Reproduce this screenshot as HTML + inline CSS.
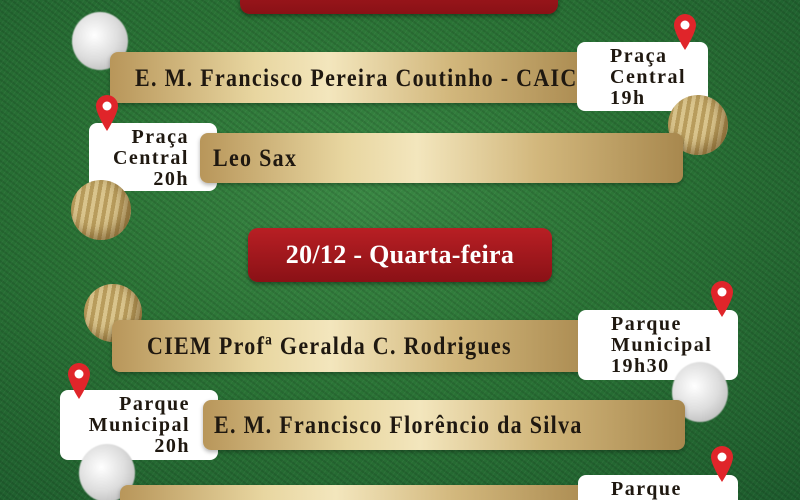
<!DOCTYPE html>
<html style="width:800px;height:500px;overflow:hidden"><head><meta charset="utf-8"><style>
*{margin:0;padding:0;box-sizing:border-box}
body{width:800px;height:500px;overflow:hidden;position:relative;font-family:"Liberation Serif",serif;font-weight:bold;
background:radial-gradient(ellipse at 45% 40%,#3a8844 0%,#2a7335 45%,#1d5c2d 100%);}
.tex{position:absolute;inset:0;background:
repeating-linear-gradient(37deg,rgba(0,0,0,.1) 0 2px,transparent 2px 5px),
repeating-linear-gradient(-53deg,rgba(255,255,255,.04) 0 1px,transparent 1px 4px);}
.bar{position:absolute;border-radius:8px;background:linear-gradient(90deg,#b8965a 0%,#e8d6a0 30%,#f3e6bd 45%,#d2b77c 70%,#a8884e 100%);box-shadow:0 2px 4px rgba(0,0,0,.3);color:#1f1810;font-size:22px;letter-spacing:1.3px;display:flex;align-items:center}
.bar span,.box span{display:inline-block;transform:scaleY(1.15)}
.box{position:absolute;background:#fff;border-radius:8px;color:#1f1810;font-size:20px;line-height:21px;letter-spacing:1.5px;padding-top:4px}
.red{position:absolute;border-radius:10px;background:linear-gradient(180deg,#b81f24,#8a1116);box-shadow:0 2px 4px rgba(0,0,0,.4);color:#fff;font-size:26px;display:flex;align-items:center;justify-content:center;font-weight:bold;letter-spacing:.3px}
.ball{position:absolute;border-radius:50%}
.g{background:repeating-linear-gradient(100deg,#d9c48c 0 4px,#b89c5c 4px 8px);box-shadow:inset -6px -6px 12px rgba(90,60,20,.5)}
.s{background:radial-gradient(circle at 40% 40%,#fff,#ddd 50%,#aaa);filter:blur(.6px)}
.pin{position:absolute;width:24px;height:38px}
</style></head><body><div class="tex"></div>
<div class="red" style="left:240px;top:-40px;width:318px;height:54px"></div>

<div class="ball s" style="left:72px;top:12px;width:56px;height:58px"></div>
<div class="bar" style="left:110px;top:52px;width:486px;height:51px;padding-left:25px"><span>E. M. Francisco Pereira Coutinho - CAIC</span></div>
<div class="box" style="left:577px;top:42px;width:131px;height:69px;padding-left:33px">Praça<br>Central<br>19h</div>
<svg class="pin" style="left:673px;top:13px" viewBox="0 0 24 38"><path d="M12 37C12 37 1 20 1 12a11 11 0 0 1 22 0c0 8-11 25-11 25z" fill="#e0252a"/><circle cx="12" cy="12" r="4.5" fill="#fff"/></svg>
<div class="ball g" style="left:668px;top:95px;width:60px;height:60px"></div>

<div class="box" style="left:89px;top:123px;width:128px;height:68px;text-align:right;padding-right:28px">Praça<br>Central<br>20h</div>
<div class="bar" style="left:200px;top:133px;width:483px;height:50px;padding-left:13px"><span>Leo Sax</span></div>
<svg class="pin" style="left:95px;top:94px" viewBox="0 0 24 38"><path d="M12 37C12 37 1 20 1 12a11 11 0 0 1 22 0c0 8-11 25-11 25z" fill="#e0252a"/><circle cx="12" cy="12" r="4.5" fill="#fff"/></svg>
<div class="ball g" style="left:71px;top:180px;width:60px;height:60px"></div>

<div class="red" style="left:248px;top:228px;width:304px;height:54px">20/12 - Quarta-feira</div>

<div class="ball g" style="left:84px;top:284px;width:58px;height:58px"></div>
<div class="bar" style="left:112px;top:320px;width:486px;height:52px;padding-left:35px"><span>CIEM Profª Geralda C. Rodrigues</span></div>
<div class="box" style="left:578px;top:310px;width:160px;height:70px;padding-left:33px">Parque<br>Municipal<br>19h30</div>
<svg class="pin" style="left:710px;top:280px" viewBox="0 0 24 38"><path d="M12 37C12 37 1 20 1 12a11 11 0 0 1 22 0c0 8-11 25-11 25z" fill="#e0252a"/><circle cx="12" cy="12" r="4.5" fill="#fff"/></svg>
<div class="ball s" style="left:672px;top:362px;width:56px;height:60px"></div>

<div class="box" style="left:60px;top:390px;width:158px;height:70px;text-align:right;padding-right:28px">Parque<br>Municipal<br>20h</div>
<div class="bar" style="left:203px;top:400px;width:482px;height:50px;padding-left:11px"><span>E. M. Francisco Florêncio da Silva</span></div>
<svg class="pin" style="left:67px;top:362px" viewBox="0 0 24 38"><path d="M12 37C12 37 1 20 1 12a11 11 0 0 1 22 0c0 8-11 25-11 25z" fill="#e0252a"/><circle cx="12" cy="12" r="4.5" fill="#fff"/></svg>
<div class="ball s" style="left:79px;top:444px;width:56px;height:58px"></div>

<div class="bar" style="left:120px;top:485px;width:480px;height:15px;border-radius:8px 8px 0 0"></div>
<div class="box" style="left:578px;top:475px;width:160px;height:25px;padding-left:33px;border-radius:8px 8px 0 0">Parque</div>
<svg class="pin" style="left:710px;top:445px" viewBox="0 0 24 38"><path d="M12 37C12 37 1 20 1 12a11 11 0 0 1 22 0c0 8-11 25-11 25z" fill="#e0252a"/><circle cx="12" cy="12" r="4.5" fill="#fff"/></svg>
</body></html>
